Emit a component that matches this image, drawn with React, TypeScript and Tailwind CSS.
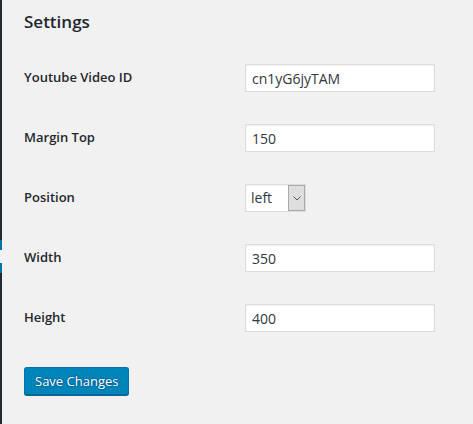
import React from 'react';

const FIELDS = [
  { label: 'Youtube Video ID', value: 'cn1yG6jyTAM', kind: 'text' },
  { label: 'Margin Top', value: '150', kind: 'text' },
  { label: 'Position', value: 'left', kind: 'select' },
  { label: 'Width', value: '350', kind: 'text' },
  { label: 'Height', value: '400', kind: 'text' },
];

function SideStrip() {
  return (
    <div className="flex w-[2px] shrink-0 flex-col">
      <div className="h-[240px] bg-[#23282d]" />
      <div className="h-[10px] bg-[#0073aa]" />
      <div className="h-[13px] bg-[#f1f1f1]" />
      <div className="h-[10px] bg-[#0073aa]" />
      <div className="flex-1 bg-[#23282d]" />
    </div>
  );
}

function FakeSelect({ value }: { value: string }) {
  return (
    <div className="flex h-[28px] w-[61px] border border-[#ddd] bg-white shadow-[inset_0_1px_2px_rgba(0,0,0,0.07)]">
      <span className="flex-1 pl-[5px] text-[14px] leading-[26px] text-[#32373c]">{value}</span>
      <div className="flex w-[17px] items-center justify-center border border-[#a9a9a9] bg-[#dedede]">
        <svg width="8" height="5" viewBox="0 0 8 5" fill="none">
          <path d="M0.5 0.5 L4 4 L7.5 0.5" stroke="#555" strokeWidth="1" />
        </svg>
      </div>
    </div>
  );
}

export default function App() {
  return (
    <div className="flex h-[424px] w-[473px] bg-[#f1f1f1] font-['Open_Sans',_'Liberation_Sans',_sans-serif] text-[#23282d]">
      <SideStrip />
      <div className="flex flex-1 flex-col pl-[22px]">
        <h2 className="pt-[10px] text-[17px] font-semibold leading-[24px]">Settings</h2>

        <div className="mt-[14px] flex flex-col">
          {FIELDS.map((f) => (
            <div key={f.label} className="flex h-[60px] items-center">
              <label className="w-[221px] shrink-0 text-[13px] font-semibold">{f.label}</label>
              {f.kind === 'select' ? (
                <FakeSelect value={f.value} />
              ) : (
                <input
                  readOnly
                  value={f.value}
                  className="h-[28px] w-[190px] border border-[#ddd] bg-white px-[6px] text-[14px] text-[#32373c] shadow-[inset_0_1px_2px_rgba(0,0,0,0.07)] outline-none"
                />
              )}
            </div>
          ))}
        </div>

        <div className="mt-[19px]">
          <button className="h-[28px] rounded-[3px] border border-[#0073aa] border-b-[#006799] bg-[#0085ba] px-[10px] text-[13px] leading-[26px] text-white shadow-[0_1px_0_#006799] [text-shadow:0_-1px_1px_#006799,1px_0_1px_#006799,0_1px_1px_#006799,-1px_0_1px_#006799]">
            Save Changes
          </button>
        </div>
      </div>
    </div>
  );
}
